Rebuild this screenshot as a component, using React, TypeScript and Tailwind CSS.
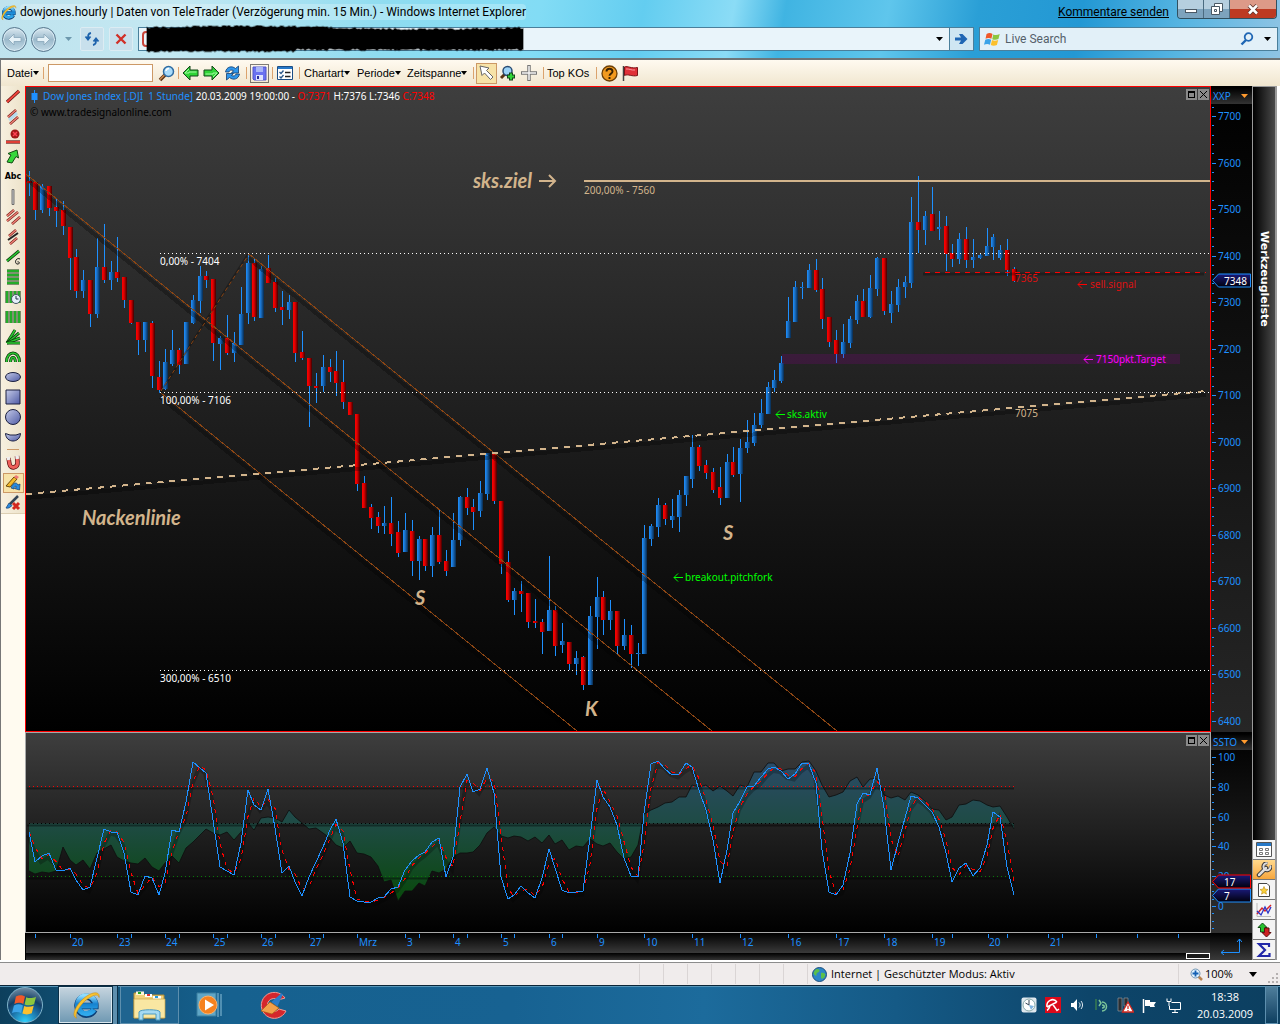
import React from 'react';

type Candle = [x: number, high: number, top: number, bottom: number, low: number, up: 0 | 1];

const CANDLES: Candle[] = [
  [29, 171, 181, 183, 196, 0], [35, 181, 182, 210, 220, 0], [42, 184, 186, 210, 213, 1], [49, 186, 186, 208, 216, 0],
  [56, 199, 207, 211, 227, 0], [63, 201, 210, 226, 235, 0], [70, 227, 227, 258, 290, 0], [76, 249, 257, 291, 298, 0],
  [83, 270, 280, 291, 298, 1], [90, 280, 280, 314, 327, 0], [97, 238, 267, 314, 318, 1], [104, 224, 267, 280, 283, 0],
  [111, 261, 272, 280, 290, 1], [117, 237, 272, 278, 282, 0], [124, 277, 277, 300, 308, 0], [131, 300, 300, 323, 324, 0],
  [138, 322, 322, 340, 355, 0], [145, 322, 322, 340, 352, 1], [152, 321, 323, 376, 388, 0], [159, 361, 377, 390, 393, 0],
  [165, 349, 362, 389, 390, 1], [172, 330, 350, 364, 366, 1], [179, 348, 350, 365, 374, 0], [186, 322, 322, 364, 364, 1],
  [193, 295, 300, 323, 324, 1], [200, 266, 276, 301, 313, 1], [206, 271, 276, 280, 288, 0], [213, 279, 279, 343, 361, 0],
  [220, 336, 338, 344, 370, 1], [227, 315, 338, 353, 355, 0], [234, 332, 343, 353, 362, 1], [241, 287, 314, 345, 345, 1],
  [248, 254, 263, 313, 324, 1], [254, 258, 263, 317, 321, 0], [261, 266, 269, 318, 318, 1], [268, 255, 268, 283, 283, 0],
  [275, 278, 282, 308, 312, 0], [282, 291, 307, 310, 325, 0], [289, 295, 302, 310, 319, 1], [295, 302, 302, 353, 362, 0],
  [302, 331, 352, 358, 360, 0], [309, 358, 358, 386, 427, 0], [316, 373, 386, 388, 403, 0], [323, 355, 367, 386, 392, 1],
  [330, 359, 367, 372, 382, 0], [336, 351, 371, 383, 396, 0], [343, 360, 382, 402, 409, 0], [350, 402, 402, 415, 415, 0],
  [357, 414, 414, 484, 491, 0], [364, 476, 483, 508, 508, 0], [371, 504, 507, 518, 529, 0], [378, 512, 517, 526, 533, 0],
  [384, 506, 523, 526, 534, 1], [391, 497, 523, 534, 546, 0], [398, 521, 532, 553, 557, 0], [405, 513, 530, 552, 552, 1],
  [412, 520, 531, 561, 576, 0], [419, 536, 539, 561, 580, 1], [425, 539, 539, 566, 571, 0], [432, 527, 535, 566, 577, 1],
  [439, 509, 535, 562, 564, 0], [446, 550, 561, 571, 576, 0], [453, 513, 540, 567, 567, 1], [460, 496, 497, 540, 546, 1],
  [467, 488, 497, 508, 515, 0], [473, 499, 507, 512, 530, 0], [480, 481, 493, 511, 517, 1], [487, 453, 453, 494, 500, 1],
  [494, 453, 453, 501, 504, 0], [501, 501, 501, 564, 574, 0], [508, 551, 562, 600, 602, 0], [514, 588, 591, 600, 615, 1],
  [521, 581, 591, 594, 612, 0], [528, 593, 593, 622, 628, 0], [535, 599, 621, 623, 628, 0], [542, 619, 622, 632, 654, 0],
  [549, 556, 610, 631, 631, 1], [555, 606, 610, 646, 656, 0], [562, 623, 641, 645, 653, 1], [569, 642, 642, 664, 670, 0],
  [576, 651, 658, 664, 675, 1], [583, 656, 657, 685, 690, 0], [590, 606, 616, 685, 685, 1], [597, 577, 597, 617, 649, 1],
  [603, 591, 597, 620, 635, 0], [610, 600, 611, 620, 630, 1], [617, 611, 611, 646, 654, 0], [624, 619, 635, 646, 650, 1],
  [631, 625, 635, 654, 668, 0], [638, 643, 653, 654, 666, 1], [644, 525, 538, 654, 654, 1], [651, 524, 526, 539, 546, 1],
  [658, 498, 505, 527, 537, 1], [665, 503, 505, 519, 525, 0], [672, 499, 516, 520, 528, 1], [679, 490, 495, 517, 532, 1],
  [686, 476, 476, 495, 506, 1], [692, 435, 447, 479, 488, 1], [699, 445, 447, 466, 471, 0], [706, 460, 465, 473, 479, 0],
  [713, 468, 472, 490, 493, 0], [720, 467, 487, 498, 505, 0], [727, 454, 462, 498, 498, 1], [733, 447, 462, 475, 477, 0],
  [740, 439, 448, 474, 502, 1], [747, 420, 442, 448, 453, 1], [754, 413, 425, 443, 446, 1], [761, 399, 413, 425, 428, 1],
  [768, 382, 387, 414, 414, 1], [774, 370, 380, 388, 392, 1], [781, 356, 363, 381, 383, 1], [788, 297, 321, 338, 338, 1],
  [795, 281, 287, 322, 322, 1], [802, 282, 287, 288, 299, 1], [809, 264, 270, 288, 288, 1], [816, 259, 270, 290, 292, 0],
  [822, 278, 289, 319, 329, 0], [829, 317, 317, 342, 347, 0], [836, 330, 340, 354, 363, 0], [843, 324, 342, 354, 358, 1],
  [850, 316, 319, 343, 348, 1], [857, 295, 301, 320, 324, 1], [863, 289, 301, 317, 317, 0], [870, 275, 288, 317, 318, 1],
  [877, 257, 258, 289, 296, 1], [884, 258, 258, 311, 315, 0], [891, 291, 304, 313, 323, 1], [898, 279, 287, 305, 312, 1],
  [905, 276, 282, 287, 298, 1], [911, 197, 222, 283, 288, 1], [918, 176, 222, 230, 253, 0], [925, 211, 216, 230, 245, 1],
  [932, 187, 214, 231, 231, 0], [939, 211, 227, 229, 240, 1], [946, 216, 226, 254, 271, 0], [952, 244, 253, 259, 267, 0],
  [959, 233, 239, 259, 264, 1], [966, 227, 239, 260, 268, 0], [973, 239, 257, 260, 268, 1], [980, 254, 255, 258, 259, 1],
  [987, 228, 246, 256, 256, 1], [993, 234, 237, 247, 260, 1], [1000, 245, 250, 258, 260, 1], [1007, 239, 250, 270, 276, 0],
  [1014, 267, 269, 281, 282, 0],
];

// one value per candle
const STOCH = [
  102, 132, 126, 123, 140, 141, 138, 150, 160, 157, 128, 99, 102, 102, 123, 162, 165, 146, 148, 165, 143, 100, 102, 72, 32,
  38, 43, 90, 137, 141, 145, 113, 60, 75, 80, 59, 98, 143, 136, 152, 166, 147, 132, 117, 100, 89, 113, 167, 171, 172,
  172, 168, 167, 159, 157, 140, 131, 125, 122, 112, 108, 147, 127, 57, 44, 62, 59, 38, 63, 147, 169, 165, 156, 163, 168,
  148, 119, 138, 160, 163, 162, 161, 107, 50, 67, 77, 95, 128, 146, 147, 83, 34, 31, 39, 45, 44, 33, 37, 60, 80,
  110, 153, 120, 83, 71, 57, 56, 47, 39, 37, 41, 49, 44, 33, 34, 53, 120, 162, 165, 155, 123, 74, 63, 65, 38,
  78, 140, 113, 88, 66, 68, 75, 82, 97, 123, 152, 138, 133, 146, 138, 115, 82, 87, 137, 165,
];

const AREA = [
  141, 144, 142, 143, 141, 117, 130, 135, 130, 139, 123, 119, 115, 127, 131, 133, 134, 128, 137, 141, 133, 126, 133, 118, 112,
  105, 99, 103, 105, 102, 110, 102, 93, 100, 88, 87, 88, 92, 80, 87, 93, 99, 98, 103, 108, 115, 118, 111, 123, 124,
  127, 136, 152, 150, 171, 161, 161, 153, 156, 141, 143, 139, 127, 123, 123, 122, 115, 103, 97, 106, 108, 106, 107, 111, 107,
  113, 105, 114, 110, 120, 116, 117, 109, 114, 116, 113, 122, 129, 127, 115, 84, 80, 77, 73, 72, 67, 67, 55, 57, 55,
  61, 56, 61, 66, 55, 57, 42, 42, 33, 33, 41, 39, 39, 32, 31, 41, 55, 67, 65, 62, 51, 47, 57, 49, 49,
  65, 68, 66, 70, 62, 65, 71, 79, 80, 90, 87, 75, 74, 70, 71, 75, 77, 76, 87, 99,
];

const TIME_TICKS = [
  35, 70, 117, 131, 165, 179, 213, 227, 261, 275, 309, 323, 357, 405, 419, 453, 467, 501, 514, 549, 562, 597, 644, 692,
  740, 788, 836, 884, 932, 952, 988, 1007, 1048, 1062, 1096, 1137, 1178,
];

const TIME_LABELS: [number, string][] = [
  [72, '20'], [119, '23'], [166, '24'], [214, '25'], [262, '26'], [310, '27'], [359, 'Mrz'], [407, '3'], [455, '4'],
  [503, '5'], [551, '6'], [599, '9'], [646, '10'], [694, '11'], [742, '12'], [790, '16'], [838, '17'], [886, '18'],
  [934, '19'], [989, '20'], [1050, '21'],
];

const toPath = (values: number[]) =>
  values.map((v, i) => `${i ? 'L' : 'M'}${CANDLES[i][0]} ${v}`).join('');

const signal = STOCH.map((v, i) => (i ? (v + STOCH[i - 1]) / 2 : v));
const stochPath = toPath(STOCH);
const signalPath = toPath(signal);
const areaLine = toPath(AREA);

const chartFont = "font-['Noto_Sans','Open_Sans',sans-serif]";
const noteFont = "font-['Lato',sans-serif] font-bold italic text-[20px]";

/* ---------- browser chrome ---------- */

function IeLogo({ size }: { size: number }) {
  return (
    <svg width={size} height={size} viewBox="0 0 32 32" fill="none">
      <defs>
        <linearGradient id="ieBlue" x1="0" y1="0" x2="0" y2="1">
          <stop offset="0" stopColor="#8fdcff" />
          <stop offset=".45" stopColor="#1682d0" />
          <stop offset="1" stopColor="#2fa9ec" />
        </linearGradient>
      </defs>
      <path d="M25 21A9.5 9.5 0 1 1 26 17H10" stroke="#0b3f77" strokeWidth="7" />
      <path d="M24.500 21A9.500 9.500 0 1 1 26 17H10" stroke="url(#ieBlue)" strokeWidth="5.500" />
      <path d="M6 30C-1 28 6 14 16 7C23 2 31 1 30 8C29 3 23 6 17 10C9 16 3 27 6 30Z" fill="#f7c331" stroke="#c98a10" strokeWidth=".6" />
    </svg>
  );
}

function WinFlag({ size }: { size: number }) {
  return (
    <svg width={size} height={size} viewBox="0 0 20 20">
      <path d="M3 3.500C5.500 2 8 2.300 10 3.500L8.700 9.200C6.700 8 4.300 8 1.800 9.200Z" fill="#f0592a" />
      <path d="M10.900 4C13 5 15.500 5 18.500 3.600L17 9.400C14.500 10.500 12 10.500 9.700 9.600Z" fill="#8cc63e" />
      <path d="M1.500 10.300C4 9.200 6.300 9.200 8.400 10.300L7 16.200C5 15 2.500 15 0 16.200Z" fill="#3ba3e8" />
      <path d="M9.400 10.700C11.500 11.700 14 11.700 16.700 10.600L15.200 16.400C12.500 17.600 10 17.400 8 16.600Z" fill="#fbc02e" />
    </svg>
  );
}

function Scribble() {
  const top: string[] = [];
  const bottom: string[] = [];
  for (let x = 1; x <= 378; x += 2) {
    const n = Math.abs(Math.sin(x * 12.9) * 43.7) % 1;
    const m = Math.abs(Math.sin(x * 7.3 + 2) * 91.1) % 1;
    top.push(`${x},${(2 + n * 2 - Math.sin(x / 60) * 1.5).toFixed(1)}`);
    bottom.unshift(`${x},${(25 + m * 2 - (x > 150 ? 1.5 : 0)).toFixed(1)}`);
  }
  const points = [...top, ...bottom].join(' ');
  return (
    <svg width="379" height="30" className="absolute -top-[3px] left-[7px]">
      <polygon points={points} fill="#000" stroke="#000" strokeOpacity=".35" strokeWidth="2" strokeLinejoin="round" />
    </svg>
  );
}

function NavCircle({ label, flip }: { label: string; flip?: boolean }) {
  return (
    <button aria-label={label} className="flex size-[25px] items-center justify-center rounded-full border border-[#56758c] bg-linear-to-b from-[#dbe9f1] via-[#9bb9cb] to-[#c3dbe7] shadow-[inset_0_0_0_1px_#d8eaf3]">
      <svg width="15" height="13" viewBox="0 0 15 13" className={flip ? 'rotate-180' : ''}>
        <path d="M7 1L1.500 6.500L7 12V8.500H14V4.500H7Z" fill="#e6f2f8" stroke="#88a6b9" strokeWidth=".8" />
      </svg>
    </button>
  );
}

function BrowserHeader() {
  return (
    <header className="h-[60px] shrink-0 border-b-2 border-[#6d7477] bg-[linear-gradient(100deg,#bfe3ee_0%,#c3e8f2_14%,#8fdcf0_30%,#82dcf5_42%,#63cdf0_50%,#8bdcf6_57%,#40b4e2_61%,#5fc6ec_69%,#2a9fd6_76%,#2398d4_84%,#57b5e2_92%,#8fc4e4_100%)] font-['Roboto','Noto_Sans',sans-serif] text-[12px]">
      <div className="flex h-[25px] items-start">
        <div className="flex h-6 flex-1 items-center gap-[3px]">
          <IeLogo size={17} />
          <h1 className="whitespace-nowrap rounded bg-white/25 leading-4 text-black">
            dowjones.hourly | Daten von TeleTrader (Verzögerung min. 15 Min.) - Windows Internet Explorer
          </h1>
        </div>
        <a href="#feedback" className="mr-2 leading-6 text-black underline">Kommentare senden</a>
        <div className="mr-[3px] flex h-[19px] overflow-hidden rounded-b border border-t-0 border-[#31505f]">
          <button aria-label="Minimieren" className="flex w-[26px] items-center justify-center border-r border-[#4b6b80] bg-linear-to-b from-[#b6cfdf] from-50% to-[#7da3bd] to-50%">
            <span className="mt-1 h-1 w-3 border border-[#4a5864] bg-white" />
          </button>
          <button aria-label="Wiederherstellen" className="flex w-[26px] items-center justify-center border-r border-[#4b6b80] bg-linear-to-b from-[#b6cfdf] from-50% to-[#7da3bd] to-50%">
            <svg width="12" height="12" viewBox="0 0 12 12" fill="#fff" stroke="#4a5864"><path d="M3.500 .5H11.500V8.500H3.500Z" /><path d="M.5 3.500H8.500V11.500H.5Z" /><path d="M3.500 6.500H5.500V8.500H3.500Z" /></svg>
          </button>
          <button aria-label="Schließen" className="flex w-[46px] items-center justify-center bg-linear-to-b from-[#dd9a88] from-50% to-[#bd3a22] to-50%">
            <svg width="12" height="11" viewBox="0 0 12 11"><path d="M2 1.500L10 9.500M10 1.500L2 9.500" stroke="#59332d" strokeWidth="4" /><path d="M2 1.500L10 9.500M10 1.500L2 9.500" stroke="#fff" strokeWidth="2.500" /></svg>
          </button>
        </div>
      </div>
      <div className="flex h-7 items-center gap-[5px] pl-0.5 pr-0.5">
        <div className="flex items-center gap-1">
          <NavCircle label="Zurück" />
          <NavCircle label="Vorwärts" flip />
        </div>
        <button aria-label="Verlauf" className="flex w-[14px] justify-center">
          <svg width="7" height="4"><path d="M0 0H7L3.500 4Z" fill="#6d98ad" /></svg>
        </button>
        <button aria-label="Aktualisieren" className="flex size-6 items-center justify-center rounded-xs border border-[#dcecf3] bg-[#c8e0ec]">
          <svg width="16" height="16" viewBox="0 0 16 16" fill="none" stroke="#1d62ac" strokeWidth="1.800"><path d="M7 2C4 2.500 4 4.500 4 8M1.500 5.500L4 8.500L6.500 5.500" /><path d="M9 14C12 13.500 12 11.500 12 8M9.500 10.500L12 7.500L14.500 10.500" /></svg>
        </button>
        <button aria-label="Abbrechen" className="flex size-6 items-center justify-center rounded-xs border border-[#dcecf3] bg-[#c8e0ec]">
          <svg width="12" height="12" viewBox="0 0 12 12"><path d="M1.500 1.500L10.500 10.500M10.500 1.500L1.500 10.500" stroke="#d03028" strokeWidth="2.400" /></svg>
        </button>
        <div className="relative flex h-6 min-w-0 flex-1 items-center border border-[#4a7f9b] bg-[#e9f4fa]">
          <span className="ml-[3px] h-4 w-3 rounded border-2 border-[#c8453b]" />
          <input aria-label="Adresse" className="min-w-0 flex-1 bg-transparent outline-none" />
          <Scribble />
          <button aria-label="Adressliste" className="flex w-5 justify-center"><svg width="7" height="4"><path d="M0 0H7L3.500 4Z" fill="#000" /></svg></button>
          <button aria-label="Wechseln zu" className="flex h-full w-6 items-center justify-center border-l border-[#4a7f9b] bg-[#cfe6f2]">
            <svg width="13" height="12" viewBox="0 0 13 12"><path d="M0 4.500H6L4 1H7.500L12.500 6L7.500 11H4L6 7.500H0Z" fill="#1f66b4" /></svg>
          </button>
        </div>
        <div className="flex h-6 w-[299px] items-center border border-[#4a7f9b] bg-[#e2f0f8] pl-1">
          <WinFlag size={17} />
          <input aria-label="Live Search" placeholder="Live Search" className="min-w-0 flex-1 bg-transparent pl-1 outline-none placeholder:text-[#55606a]" />
          <button aria-label="Suchen" className="flex w-5 justify-center">
            <svg width="14" height="14" viewBox="0 0 14 14" fill="none"><circle cx="8.500" cy="5" r="3.800" stroke="#1f66b4" strokeWidth="1.800" /><path d="M6 8L1.500 12.500" stroke="#1f66b4" strokeWidth="2.400" /></svg>
          </button>
          <button aria-label="Suchoptionen" className="flex w-5 justify-center"><svg width="7" height="4"><path d="M0 0H7L3.500 4Z" fill="#000" /></svg></button>
        </div>
      </div>
    </header>
  );
}

/* ---------- chart toolbar ---------- */

function Sep({ className }: { className: string }) {
  return <span className={`flex justify-center ${className}`}><span className="h-3 w-px bg-[#dba36e]" /></span>;
}

function ToolButton({ label, active, children }: { label: string; active?: boolean; children: React.ReactNode }) {
  return (
    <button aria-label={label} className={`flex size-[21px] shrink-0 items-center justify-center ${active ? 'border border-[#cc9966] bg-[#f7e3a8]' : ''}`}>
      {children}
    </button>
  );
}

function MenuButton({ className, children }: { className: string; children: string }) {
  return (
    <button className={`flex shrink-0 items-center text-left ${className}`}>
      {children}
      <svg width="6" height="4"><path d="M0 0H6L3 4Z" fill="#000" /></svg>
    </button>
  );
}

function GreenArrow({ flip }: { flip?: boolean }) {
  return (
    <svg width="17" height="16" viewBox="0 0 17 16" className={flip ? 'rotate-180' : ''}>
      <path d="M8 1L1 8L8 15V11H16V5H8Z" fill="#2fd436" stroke="#14461a" />
      <path d="M7 4L3 8H7V7H14.500" fill="none" stroke="#a4f7a0" />
    </svg>
  );
}

function ChartToolbar() {
  return (
    <div role="toolbar" aria-label="Chart" className="flex h-[26px] shrink-0 items-center border-l border-[#777] bg-linear-to-b from-[#fffaf0] to-[#f0e6cf] pl-1.5 font-['Liberation_Sans',Arial,sans-serif] text-[11px] text-black">
      <MenuButton className="w-8">Datei</MenuButton>
      <Sep className="w-[9px]" />
      <input aria-label="Symbol" className="h-[18px] w-[105px] border border-[#cc9966] bg-white outline-none" />
      <span className="w-[3px]" />
      <ToolButton label="Suchen">
        <svg width="17" height="17" viewBox="0 0 17 17"><path d="M7 10L2 15" stroke="#5b3414" strokeWidth="3.500" /><path d="M6.500 10L2 14.500" stroke="#d08a4e" strokeWidth="1.500" /><circle cx="10.500" cy="6.500" r="5" fill="#a9dcfb" stroke="#2f6ca2" strokeWidth="1.500" /><path d="M8 6A3 3 0 0 1 11 3.500" stroke="#fff" strokeWidth="1.500" fill="none" /></svg>
      </ToolButton>
      <Sep className="w-[3px]" />
      <ToolButton label="Zurück"><GreenArrow /></ToolButton>
      <ToolButton label="Vor"><GreenArrow flip /></ToolButton>
      <ToolButton label="Aktualisieren">
        <svg width="17" height="16" viewBox="0 0 17 16" fill="#2f96ea" stroke="#123e70" strokeWidth=".8"><path d="M1.500 7C2.500 1.500 8 .5 11.500 3.500L14.500 1V8H7.500L9.500 5.700C7.500 4.500 5.500 5 5 7Z" /><path d="M15.500 9C14.500 14.500 9 15.500 5.500 12.500L2.500 15V8.500H9.500L7.500 10.500C9.500 11.500 11.500 11 12 9Z" /></svg>
      </ToolButton>
      <Sep className="w-[6px]" />
      <ToolButton label="Speichern">
        <svg width="19" height="19" viewBox="0 0 19 19"><path d="M.5 .5H18.500V18.500H.5Z" fill="none" stroke="#000" strokeDasharray="1 1" /><path d="M3 3H16V16H4L3 15Z" fill="#6a72f0" stroke="#5057c9" /><path d="M6 3H13V8H6Z" fill="#a9b6f7" /><path d="M6 11H13V16H6Z" fill="#dfe4fd" /><path d="M7 12H9V15H7Z" fill="#2a2f9c" /></svg>
      </ToolButton>
      <Sep className="w-1" />
      <ToolButton label="Liste">
        <svg width="16" height="14" viewBox="0 0 16 14"><path d="M.5 .5H15.500V13.500H.5Z" fill="#fff" stroke="#1b4e86" /><path d="M1 1H15V3H1Z" fill="#2779c8" /><path d="M2.500 6L4 7.500L6.500 4.500M2.500 10.500L4 12L6.500 9" fill="none" stroke="#2d5a8c" strokeWidth="1.400" /><path d="M8 6.500H13.500M8 10.500H13.500" stroke="#222" strokeWidth="1.400" /></svg>
      </ToolButton>
      <Sep className="w-[9px]" />
      <MenuButton className="w-[53px]">Chartart</MenuButton>
      <MenuButton className="w-[50px]">Periode</MenuButton>
      <MenuButton className="w-[63px]">Zeitspanne</MenuButton>
      <Sep className="w-[6px]" />
      <ToolButton label="Zeiger" active>
        <svg width="15" height="16" viewBox="0 0 15 16"><path d="M1 1L10 3L7.500 5.500L14 12L11.500 14.500L5.500 8L3 10.500Z" fill="#fff" stroke="#666" /></svg>
      </ToolButton>
      <ToolButton label="Vergrößern">
        <svg width="17" height="17" viewBox="0 0 17 17"><path d="M6 9L2 13" stroke="#5b3414" strokeWidth="3" /><circle cx="8.500" cy="6" r="4.500" fill="#9cd3f7" stroke="#2a4d74" strokeWidth="1.500" /><path d="M12 7.500V15.500M8 11.500H16" stroke="#14461a" strokeWidth="4" /><path d="M12 8.500V14.500M9 11.500H15" stroke="#2fd436" strokeWidth="2" /></svg>
      </ToolButton>
      <ToolButton label="Fadenkreuz">
        <svg width="16" height="16" viewBox="0 0 16 16"><path d="M8 0V16M0 8H16" stroke="#777" strokeWidth="3.500" /><path d="M8 1V15M1 8H15" stroke="#f4f4f4" strokeWidth="1.500" /></svg>
      </ToolButton>
      <Sep className="w-2" />
      <button className="w-[46px] shrink-0 text-left">Top KOs</button>
      <Sep className="w-[6px]" />
      <ToolButton label="Hilfe">
        <svg width="17" height="17" viewBox="0 0 17 17"><circle cx="8.500" cy="8.500" r="7.500" fill="#f29a1f" stroke="#6d3f06" strokeWidth="1.300" /><path d="M5.500 6.500C5.500 2.800 11.500 2.800 11.500 6.500C11.500 8.800 8.500 8.500 8.500 10.800M8.500 12V14" fill="none" stroke="#3a2203" strokeWidth="1.900" /></svg>
      </ToolButton>
      <ToolButton label="Melden">
        <svg width="17" height="17" viewBox="0 0 17 17"><path d="M1.500 1V16" stroke="#444" strokeWidth="1.500" /><path d="M2.500 2C6 .5 9 4 15.500 2.500V10.500C10 12 6 8.500 2.500 10.500Z" fill="#e03038" stroke="#7a1216" /><path d="M4 4C7 3.500 9 5.500 13 5" stroke="#f8999c" fill="none" /></svg>
      </ToolButton>
    </div>
  );
}

/* ---------- drawing tools on the left ---------- */

const redBar = (d: string) => (
  <g>
    <path d={d} stroke="#5d1010" strokeWidth="3.200" />
    <path d={d} stroke="#f0463c" strokeWidth="1.800" />
  </g>
);

const thinBar = (d: string) => (
  <g>
    <path d={d} stroke="#7a2018" strokeWidth="2.600" />
    <path d={d} stroke="#f4867c" strokeWidth="1.200" />
  </g>
);

const greenBar = (d: string, key?: number) => (
  <g key={key}>
    <path d={d} stroke="#0b3b0d" strokeWidth="3" fill="none" />
    <path d={d} stroke="#2bc832" strokeWidth="1.600" fill="none" />
  </g>
);

const DRAW_TOOLS: [string, React.ReactNode][] = [
  ['Trendlinie', redBar('M2 13L14 2')],
  ['Parallele', <g key="p"><path d="M4 11L12 4" stroke="#b5dcf0" strokeWidth="3" />{thinBar('M3 8L11 1')}{thinBar('M5 15L13 8')}</g>],
  ['Horizontale', <g key="h"><circle cx="10" cy="5" r="4.500" fill="#a01818" /><path d="M8 3L12 7M12 3L8 7" stroke="#f45" strokeWidth="1.500" />{redBar('M1 13H15')}</g>],
  ['Pfeil', <path key="a" d="M12 1L13.500 9L11 7.500L7 14L2 13L6 6L3 4.500Z" fill="#35d83b" stroke="#124a14" />],
  ['Text', null],
  ['Vertikale', <path key="v" d="M7 .5H9V15.500H7Z" fill="#ccc" stroke="#555" strokeWidth=".8" />],
  ['Regression', <g key="r">{thinBar('M2 7L9 1')}{thinBar('M2 12L13 3')}{thinBar('M7 15L15 8')}</g>],
  ['Kanal', <g key="k">{thinBar('M4 7L11 1')}<path d="M3 11L13 4" stroke="#222" strokeWidth="2" />{thinBar('M5 15L12 9')}</g>],
  ['Gann', <g key="g">{greenBar('M2 12L14 2')}<path d="M15 10C11 8 9 14 12 15C15 15.500 15 12.500 12.500 12.800" fill="none" stroke="#111" /></g>],
  ['Retracement', <g key="f">{[2, 6, 10, 14].map((y) => greenBar(`M2 ${y}H14`, y))}</g>],
  ['Zeitzonen', <g key="z">{[2, 6, 10, 14].map((x) => greenBar(`M${x} 2V14`, x))}<circle cx="11" cy="10" r="4.500" fill="#e5f0fa" stroke="#456" /><path d="M11 7V10H13.500" stroke="#234" fill="none" /></g>],
  ['Zeitlinien', <g key="l">{[2, 6, 10, 14].map((x) => greenBar(`M${x} 2V14`, x))}</g>],
  ['Fächer', <g key="fa">{greenBar('M2 14L10 1')}{greenBar('M2 14L14 4')}{greenBar('M2 14L15 9')}{greenBar('M2 14H15')}</g>],
  ['Bögen', <g key="b">{greenBar('M1.500 13C1.500 1 14.500 1 14.500 13')}{greenBar('M5.500 13C6 7 10 7 10.500 13')}</g>],
  ['Ellipse', <ellipse key="e" cx="8" cy="8" rx="7.500" ry="4.500" fill="url(#shape)" stroke="#1c2140" />],
  ['Rechteck', <path key="q" d="M1 1H15V15H1Z" fill="url(#shape)" stroke="#1c2140" />],
  ['Kreis', <circle key="c" cx="8" cy="8" r="7.500" fill="url(#shape)" stroke="#1c2140" />],
  ['Halbkreis', <path key="hk" d="M.5 4.500L5 6H11L15.500 4.500C15 14.500 1 14.500 .5 4.500Z" fill="url(#shape)" stroke="#1c2140" />],
];

const magnet = (
  <g fill="none">
    <path d="M3.500 3L4.500 9C5.500 14.500 13 13 12.500 7L12 1" stroke="#5d1010" strokeWidth="4.500" />
    <path d="M3.500 3L4.500 9C5.500 14.500 13 13 12.500 7L12 1" stroke="#ee5f5a" strokeWidth="3" />
    <path d="M3.300 2L3.700 5M12 .5L12.300 4" stroke="#eee" strokeWidth="3.500" />
  </g>
);

function DrawTool({ label, active, children }: { label: string; active?: boolean; children: React.ReactNode }) {
  return (
    <button aria-label={label} className={`flex h-5 w-[21px] items-center justify-center ${active ? 'border border-[#cc9966] bg-[#f7e3a8]' : ''}`}>
      {label === 'Text'
        ? <span className="font-['DejaVu_Sans',Verdana,sans-serif] text-[8px] font-bold text-black">Abc</span>
        : <svg width="16" height="16" viewBox="0 0 16 16">{children}</svg>}
    </button>
  );
}

function DrawingTools() {
  return (
    <div className="w-[25px] shrink-0 border-l border-[#777] bg-[#fffbf0]">
      <svg width="0" height="0" className="absolute">
        <linearGradient id="shape" x1="0" y1="0" x2="1" y2="1"><stop offset="0" stopColor="#c5cbe8" /><stop offset="1" stopColor="#4f5ba5" /></linearGradient>
      </svg>
      <div className="flex flex-col items-center border-b border-[#ddd0b4] bg-linear-to-r from-[#f7f0df] to-[#ece2c9] pt-px">
        {DRAW_TOOLS.map(([label, icon]) => <DrawTool key={label} label={label}>{icon}</DrawTool>)}
        <span className="mb-[3px] mt-[2px] h-px w-3 bg-[#cc9966]" />
        <DrawTool label="Magnet">{magnet}</DrawTool>
        <DrawTool label="Zeichnen" active>
          <g><path d="M1 11L9 2L12 4L5 12Z" fill="#f4b92a" stroke="#6d4a08" /><path d="M9 2L11 0L14 2L12 4Z" fill="#e77" /><path d="M6 13C8 7 12 7 13 10L15 9L14.500 15L9.500 13.500L11.500 12C10 10.500 9 12 9 14Z" fill="#2a8be0" stroke="#123e70" strokeWidth=".7" /></g>
        </DrawTool>
        <DrawTool label="Löschen">
          <g><path d="M1 13L4 8L7 10.500C5 13 3 13.500 1 13Z" fill="#2a8be0" stroke="#123e70" strokeWidth=".7" /><path d="M5 9L13 1" stroke="#345" strokeWidth="2.500" /><path d="M8 8L14 14M14 8L8 14" stroke="#d3281e" strokeWidth="3" /></g>
        </DrawTool>
      </div>
    </div>
  );
}

/* ---------- chart ---------- */

function PaneButtons() {
  return (
    <div className="absolute right-px top-0.5 flex gap-px">
      <button aria-label="Maximieren" className="flex size-[11px] items-center justify-center bg-[#8a8a8a]"><span className="size-[7px] border border-t-2 border-black" /></button>
      <button aria-label="Schließen" className="flex size-[11px] items-center justify-center bg-[#8a8a8a]">
        <svg width="9" height="9" viewBox="0 0 9 9"><path d="M1 1L8 8M8 1L1 8" stroke="#000" /></svg>
      </button>
    </div>
  );
}

function ShadowLine({ x1, y1, x2, y2, stroke, width = 1, dash }: { x1: number; y1: number; x2: number; y2: number; stroke: string; width?: number; dash?: string }) {
  return (
    <g shapeRendering="crispEdges">
      <line x1={x1 - 1} y1={y1 + 4} x2={x2 - 1} y2={y2 + 4} stroke="#000" strokeOpacity=".28" strokeWidth="4" />
      <line x1={x1} y1={y1} x2={x2} y2={y2} stroke={stroke} strokeWidth={width} strokeDasharray={dash} />
    </g>
  );
}

function Arrow({ x, y, color }: { x: number; y: number; color: string }) {
  return <path d={`M${x + 9} ${y}H${x}M${x + 4} ${y - 4}L${x} ${y}L${x + 4} ${y + 4}`} stroke={color} fill="none" />;
}

function PricePlot() {
  return (
    <svg className={`absolute inset-0 size-full text-[10px] ${chartFont}`}>
      <defs>
        <linearGradient id="up"><stop offset="0" stopColor="#1e90ff" /><stop offset=".4" stopColor="#1a6fc4" /><stop offset="1" stopColor="#082a4d" /></linearGradient>
        <linearGradient id="down"><stop offset="0" stopColor="#ff0000" /><stop offset=".4" stopColor="#e00000" /><stop offset="1" stopColor="#3d0000" /></linearGradient>
      </defs>
      <g transform="translate(-26 -87)">
        {CANDLES.map(([x, high, top, bottom, low, up]) => (
          <g key={x}>
            <path d={`M${x + 0.5} ${high}V${low}`} stroke="#1e90ff" />
            <rect x={x - 2} y={top} width="5" height={Math.max(bottom - top, 1)} fill={up ? 'url(#up)' : 'url(#down)'} />
          </g>
        ))}
        <rect x="782" y="354" width="398" height="10" fill="#800080" fillOpacity=".24" />

        <ShadowLine x1={26} y1={174} x2={712} y2={731} stroke="#8b4513" />
        <ShadowLine x1={249} y1={254} x2={837} y2={731} stroke="#8b4513" />
        <ShadowLine x1={161} y1={393} x2={577} y2={731} stroke="#8b4513" />
        <path d="M160 393L248 254" stroke="#000" strokeOpacity=".3" strokeWidth="2" />
        <path d="M161 391L249 254" stroke="#8b4513" strokeDasharray="4 3" />
        <ShadowLine x1={26} y1={494} x2={1207} y2={391} stroke="#d2b48c" width={2} dash="6 6" />

        <path d="M160 253.500H1210M160 392.500H1210M160 670.500H1210" stroke="#fff" strokeDasharray="1 3" />
        <path d="M584 181H1210" stroke="#d2b48c" strokeWidth="2" />
        <path d="M923 274H1204" stroke="#000" strokeOpacity=".3" strokeWidth="3" />
        <path d="M925 272.500H1206" stroke="#f00" strokeDasharray="5 5" />

        <g fill="#fff">
          <text x="160" y="265">0,00% - 7404</text>
          <text x="160" y="404">100,00% - 7106</text>
          <text x="160" y="682">300,00% - 6510</text>
        </g>
        <text x="584" y="194" fill="#d2b48c">200,00% - 7560</text>
        <text x="1015" y="417" fill="#d2b48c">7075</text>
        <text x="1015" y="282" fill="#dd1111">7365</text>

        <Arrow x={1078} y={284.5} color="#f00" />
        <text x="1090" y="288" fill="#dd1111">sell.signal</text>
        <Arrow x={1084} y={359.5} color="#f0f" />
        <text x="1096" y="363" fill="#f0f">7150pkt.Target</text>
        <Arrow x={776} y={414.5} color="#0f0" />
        <text x="787" y="418" fill="#0f0">sks.aktiv</text>
        <Arrow x={674} y={577.5} color="#0f0" />
        <text x="685" y="581" fill="#0f0">breakout.pitchfork</text>

        <g fill="#d2b48c" className={noteFont}>
          <text x="473" y="188">sks.ziel</text>
          <text x="82" y="525">Nackenlinie</text>
          <text x="415" y="605">S</text>
          <text x="585" y="716">K</text>
          <text x="723" y="540">S</text>
        </g>
        <path d="M539 181H555M549 175L555 181L549 187" stroke="#d2b48c" strokeWidth="2" fill="none" />
      </g>
    </svg>
  );
}

function Tag({ y, text, stroke }: { y: number; text: string; stroke: string }) {
  return (
    <g>
      <path d={`M1.500 ${y}L7.500 ${y - 6.5}H39.500V${y + 6.5}H7.500Z`} fill="url(#tag)" stroke={stroke} />
      <text x="13" y={y + 4} fill="#fff">{text}</text>
    </g>
  );
}

function AxisHead({ children }: { children: string }) {
  return (
    <button className="absolute inset-x-0 top-0.5 flex h-4 items-center justify-between bg-[linear-gradient(#000,#333)] pl-0.5 pr-1 text-[10px] text-[#1e90ff]">
      <span>{children}</span>
      <svg width="7" height="4"><path d="M0 0H7L3.500 4Z" fill="#ff9a2e" /></svg>
    </button>
  );
}

function PriceAxis() {
  const ticks = Array.from({ length: 67 }, (_, i) => Math.round(30 + (i - 1) * 9.3));
  return (
    <div className={`relative w-[41px] shrink-0 bg-[linear-gradient(#000,#262626)] ${chartFont}`}>
      <svg className="absolute inset-0 size-full text-[10px]">
        <defs><linearGradient id="tag" x1="0" y1="0" x2="0" y2="1"><stop offset="0" stopColor="#1a1a78" /><stop offset="1" stopColor="#00000c" /></linearGradient></defs>
        {ticks.map((y) => <path key={y} d={`M1 ${y + 0.5}H3`} stroke="#1e90ff" />)}
        {Array.from({ length: 14 }, (_, i) => {
          const y = Math.round(30 + i * 46.5);
          return (
            <g key={i}>
              <path d={`M1 ${y + 0.5}H5`} stroke="#1e90ff" />
              <text x="7" y={y + 4} fill="#1e90ff">{7700 - i * 100}</text>
            </g>
          );
        })}
        <Tag y={194.5} text="7348" stroke="#1e90ff" />
      </svg>
      <AxisHead>XXP</AxisHead>
    </div>
  );
}

function StochPlot() {
  const start = CANDLES[0][0];
  const end = CANDLES[CANDLES.length - 1][0];
  return (
    <svg className="absolute inset-0 size-full" fill="none">
      <defs>
        <linearGradient id="area" gradientUnits="userSpaceOnUse" x1="0" y1="32" x2="0" y2="170">
          <stop offset="0" stopColor="#2b4b68" />
          <stop offset=".45" stopColor="#1e4b44" />
          <stop offset=".75" stopColor="#134925" />
          <stop offset="1" stopColor="#084a0c" />
        </linearGradient>
      </defs>
      <g transform="translate(-26 -3)">
        <path d={`${areaLine}L${end} 93.500H${start}Z`} fill="url(#area)" />
        <path d={areaLine} stroke="#0c0c0c" strokeOpacity=".8" />
        <path d={`M${start - 2} 58.500H${end}M${start - 2} 95.500H${end}M${start - 2} 148.500H${end}`} stroke="#000" strokeOpacity=".4" strokeWidth="2" />
        <path d={`M${start} 56.500H${end}`} stroke="#f00" strokeDasharray="1 3" />
        <path d={`M${start} 93.500H${end}`} stroke="#000" strokeDasharray="1 3" />
        <path d={`M${start} 146.500H${end}`} stroke="#0a7a0a" strokeDasharray="1 3" />
        <path d={signalPath} transform="translate(-1 3)" stroke="#000" strokeOpacity=".25" strokeWidth="4" />
        <g shapeRendering="crispEdges">
          <path d={signalPath} stroke="#f00" strokeDasharray="4 5" />
          <path d={stochPath} stroke="#1e90ff" />
        </g>
      </g>
    </svg>
  );
}

function StochAxis() {
  return (
    <div className={`relative w-[41px] shrink-0 bg-[linear-gradient(#000,#303030)] ${chartFont}`}>
      <svg className="absolute inset-0 size-full text-[10px]">
        {Array.from({ length: 24 }, (_, i) => <path key={i} d={`M1 ${Math.round(25 + i * 7.45) + 0.5}H3`} stroke="#1e90ff" />)}
        {Array.from({ length: 6 }, (_, i) => {
          const y = Math.round(25 + i * 29.8);
          return (
            <g key={i}>
              <path d={`M1 ${y + 0.5}H5`} stroke="#1e90ff" />
              <text x="7" y={y + 4} fill="#1e90ff">{100 - i * 20}</text>
            </g>
          );
        })}
        <Tag y={163.5} text="7" stroke="#1e90ff" />
        <Tag y={149.5} text="17" stroke="#f00" />
      </svg>
      <AxisHead>SSTO</AxisHead>
    </div>
  );
}

function TimeAxis() {
  return (
    <div className="flex h-[27px] shrink-0 border-l border-black bg-black">
      <div className="flex min-w-0 flex-1 flex-col">
        <svg className={`h-5 w-full bg-[linear-gradient(#000,#3a3a3a)] text-[10px] ${chartFont}`}>
          <g transform="translate(-26 0)">
            {TIME_TICKS.map((x) => <path key={x} d={`M${x + 0.5} 1V5`} stroke="#1e90ff" />)}
            {TIME_LABELS.map(([x, label]) => <text key={x} x={x} y="13" fill="#1e90ff">{label}</text>)}
          </g>
        </svg>
        <div className="flex h-[7px] justify-end bg-[linear-gradient(#000,#333)]">
          <span className="h-[6px] w-6 border border-white bg-[#1a1a1a]" />
        </div>
      </div>
      <div className="flex w-[42px] items-center justify-center bg-[linear-gradient(#000,#3a3a3a)]">
        <svg width="22" height="17" viewBox="0 0 22 17" fill="none" stroke="#1e90ff"><path d="M1 14.500H19.500V1M4 12L1 14.500L4 17M17 4L19.500 1L22 4" /></svg>
      </div>
    </div>
  );
}

function ChartArea() {
  return (
    <main className="flex min-w-0 flex-1 flex-col">
      <div className="flex min-h-0 flex-1">
        <section className="relative min-w-0 flex-1 overflow-hidden border border-[#f00] bg-[linear-gradient(#3e3e3e,#000)]">
          <PricePlot />
          <div className={`absolute left-1 top-0.5 text-[10px] ${chartFont}`}>
            <p className="flex h-[14px] items-center whitespace-pre leading-[14px] text-white">
              <svg width="9" height="13" viewBox="0 0 9 13" className="mr-1"><path d="M4.500 0V13" stroke="#1e90ff" /><path d="M1.500 3H7.500V10H1.500Z" fill="#1e90ff" /></svg>
              <span className="text-[#1e90ff]">Dow Jones Index [.DJI  1 Stunde]</span> 20.03.2009 19:00:00 - <span className="text-[#f00]">O:7371</span> H:7376 L:7346 <span className="text-[#f00]">C:7348</span>
            </p>
            <p className="leading-[18px] text-black">© www.tradesignalonline.com</p>
          </div>
          <PaneButtons />
        </section>
        <PriceAxis />
      </div>
      <div className="flex h-[201px] shrink-0">
        <section className="relative min-w-0 flex-1 overflow-hidden border border-[#a9a9a9] bg-[linear-gradient(#3e3e3e,#000)]">
          <StochPlot />
          <PaneButtons />
        </section>
        <StochAxis />
      </div>
      <TimeAxis />
    </main>
  );
}

/* ---------- right strip ---------- */

const SIDE_ICONS: [string, React.ReactNode][] = [
  ['Übersicht', <g key="1"><path d="M.5 .5H15.500V14.500H.5Z" fill="#fff" stroke="#555" /><path d="M1 1H15V4H1Z" fill="#2779c8" /><path d="M3.500 6.500H6.500V8.500H3.500ZM9.500 6.500H12.500V8.500H9.500ZM3.500 10.500H6.500V12.500H3.500ZM9.500 10.500H12.500V12.500H9.500Z" fill="none" stroke="#777" /></g>],
  ['Werkzeuge', <g key="2"><path d="M3 13L10 6" stroke="#333" strokeWidth="4.500" strokeLinecap="round" /><path d="M14.500 3.500A3.800 3.800 0 1 1 11.500 1" fill="none" stroke="#333" strokeWidth="3.500" /><path d="M3 13L10 6" stroke="#ddd" strokeWidth="2.500" strokeLinecap="round" /><path d="M14.200 3.500A3.500 3.500 0 1 1 11.500 1.300" fill="none" stroke="#ddd" strokeWidth="2" /></g>],
  ['Favoriten', <g key="3"><path d="M2.500 1.500H11L13.500 4V14.500H2.500Z" fill="#fff" stroke="#444" /><path d="M8 4.500L9.200 7.200L12 7.500L9.800 9.400L10.500 12.200L8 10.700L5.500 12.200L6.200 9.400L4 7.500L6.800 7.200Z" fill="#f9cf3a" stroke="#b98a12" strokeWidth=".6" /></g>],
  ['Indikatoren', <g key="4" fill="none"><path d="M1 1V14.500H15" stroke="#bbb" /><path d="M1 12L6 6L9 9L15 3" stroke="#d8232a" strokeWidth="1.500" /><path d="M1 9L5 13L9 5L12 11L15 5" stroke="#2a35c8" strokeWidth="1.300" /></g>],
  ['Kauf/Verkauf', <g key="5"><path d="M6.500 1L11 5.500H9V10H4.500V5.500H2Z" fill="#28c22f" stroke="#124a14" /><path d="M10.500 15L15 10.500H13V6H8.500V10.500H6Z" fill="#cc2222" stroke="#5d1010" /></g>],
  ['Summe', <path key="6" d="M13 5V2H3L9 8L3 14H13.500V11" fill="none" stroke="#2228a8" strokeWidth="2.200" />],
];

function SideStrip() {
  return (
    <aside className="mr-[3px] flex w-[25px] shrink-0 flex-col border border-b-0 border-r-2 border-[#9a9a9a] bg-[linear-gradient(90deg,#000,#4a4a4a)]">
      <div className="flex-1 pt-[144px]">
        <p className="mx-auto h-[100px] whitespace-nowrap font-['DejaVu_Sans',Verdana,sans-serif] text-[11px] font-bold leading-[22px] text-white [writing-mode:vertical-rl]">Werkzeugleiste</p>
      </div>
      {SIDE_ICONS.map(([label, icon]) => (
        <button key={label} aria-label={label} className={`flex h-5 items-center justify-center border-b border-[#777] ${label === 'Werkzeuge' ? 'bg-linear-to-b from-[#ffd98c] to-[#f6a63a]' : 'bg-[#f4f4f4]'}`}>
          <svg width="16" height="16" viewBox="0 0 16 16">{icon}</svg>
        </button>
      ))}
    </aside>
  );
}

/* ---------- status bar and task bar ---------- */

function StatusBar() {
  return (
    <footer className="mt-0.5 flex h-[23px] shrink-0 items-center border-t border-[#8c8c8c] bg-[#f0ecec] font-['Open_Sans',sans-serif] text-[11px] text-black">
      <span className="flex-1" />
      {[0, 1, 2, 3, 4, 5, 6].map((i) => <span key={i} className="h-5 w-6 border-l border-[#dad5d5]" />)}
      <div className="flex h-5 w-[371px] items-center gap-1 border-l border-[#dad5d5] pl-1">
        <svg width="15" height="15" viewBox="0 0 15 15"><circle cx="7.500" cy="7.500" r="7" fill="#2d86c8" stroke="#1b4d7c" /><path d="M3 3C5 1 8 2 7.500 4C7 6 4 5 4.500 8C5 10 2 8 1.500 6ZM9 6C12 5 14 7 13 9C12 12 9 13 9 10Z" fill="#5cc04a" /></svg>
        <span>Internet | Geschützter Modus: Aktiv</span>
      </div>
      <button className="flex h-5 w-[102px] items-center border-l border-[#dad5d5] pl-[11px]">
        <svg width="13" height="13" viewBox="0 0 13 13"><path d="M8 8L12 12" stroke="#b98452" strokeWidth="2.500" /><circle cx="5.500" cy="5.500" r="4.500" fill="#e0f1fc" stroke="#7396b4" /><path d="M5.500 2.500V8.500M2.500 5.500H8.500" stroke="#1460b4" strokeWidth="1.800" /></svg>
        <span className="ml-0.5 flex-1 text-left">100%</span>
        <svg width="8" height="5" className="mr-2.5"><path d="M0 0H8L4 5Z" fill="#000" /></svg>
        <svg width="12" height="12" className="mr-px mt-2" fill="#b5b0b0"><path d="M9 1H11V3H9ZM5 5H7V7H5ZM9 5H11V7H9ZM1 9H3V11H1ZM5 9H7V11H5ZM9 9H11V11H9Z" /></svg>
      </button>
    </footer>
  );
}

function TaskBar() {
  return (
    <nav className="flex h-[39px] shrink-0 items-stretch border-t border-[#0a2538] bg-[linear-gradient(90deg,#0d3f5c_0%,#0f4a6c_4%,#16618f_18%,#176292_40%,#1c6b9c_55%,#155a86_70%,#0d456a_85%,#0c3f60_100%)] font-['Open_Sans',sans-serif] text-white shadow-[inset_0_1px_0_#5796b8]">
      <button aria-label="Start" className="flex w-[58px] items-center justify-start pl-[7px]">
        <span className="flex size-9 items-center justify-center rounded-full border border-[#7fb4cc] bg-[radial-gradient(circle_at_50%_100%,#2fd3ff_0%,#1a6aa0_40%,#123f66_60%,#8fa6b8_100%)]">
          <WinFlag size={26} />
        </span>
      </button>
      <button aria-label="Internet Explorer" className="flex w-[55px] items-center justify-center border border-[#0b3048] bg-linear-to-b from-[#c6d5df] to-[#6e98b2] shadow-[inset_0_0_0_1px_#dbe8ef]"><IeLogo size={30} /></button>
      <span className="mr-[2px] w-[5px] border-r border-[#0b3048] bg-[#5d8fae]" />
      <button aria-label="Explorer" className="flex w-[59px] items-center justify-center border border-[#5d8fae] bg-[#1f6490]">
        <svg width="33" height="31" viewBox="0 0 33 31"><path d="M1 3H10L12 5H31V28H1Z" fill="#f0d27c" stroke="#b08a32" /><path d="M3 1.500H11V5H3Z" fill="#fdf6d8" /><path d="M5 2H8V4H5Z" fill="#2a2" /><path d="M12 4H19V7H12Z" fill="#fff" /><path d="M14 4H17V6H14Z" fill="#d33" /><path d="M20 6H28V9H20Z" fill="#fff" /><path d="M22 6H25V8H22Z" fill="#29d" /><path d="M1 9H32V28H1Z" fill="#f9e7a2" stroke="#c9a446" strokeWidth=".7" /><path d="M6 30V22C6 19 27 19 27 22V30H23V24H10V30Z" fill="#a5daf2" stroke="#4d9bc0" /></svg>
      </button>
      <button aria-label="Media Player" className="flex w-[62px] items-center justify-center">
        <svg width="28" height="28" viewBox="0 0 28 28"><path d="M1 2H20V25H1Z" fill="#5fa6c6" stroke="#3a7f9f" /><path d="M22 2V26M25 3V25" stroke="#8cc0d8" /><circle cx="12" cy="14" r="9" fill="#f6821f" stroke="#fbb16b" /><path d="M9 8.500L18 14L9 19.500Z" fill="#fff" /></svg>
      </button>
      <button aria-label="CCleaner" className="flex w-[64px] items-center justify-center">
        <svg width="30" height="32" viewBox="0 0 30 32"><path d="M27 9A13 13 0 1 0 28 22L21 20A6.500 6.500 0 1 1 20 11Z" fill="#d5262c" stroke="#f09a94" /><path d="M24 5L15 13L19 16Z" fill="#2c7cc8" stroke="#2c7cc8" strokeWidth="2" /><path d="M12 13L21 19L14 25L3 22Z" fill="#f3a04a" stroke="#a85d14" strokeWidth=".7" /></svg>
      </button>
      <span className="flex-1" />
      <div className="flex items-center">
        <button aria-label="Uhr" className="flex w-6 justify-center"><svg width="16" height="16" viewBox="0 0 16 16"><rect x=".5" y=".5" width="15" height="15" rx="2" fill="#dfe8ee" /><circle cx="8" cy="8" r="6" fill="#fff" stroke="#8aa" /><path d="M8 3V8L4.500 6" stroke="#345" fill="none" /><path d="M8 8L13 9L10 13Z" fill="#7fb4e0" /></svg></button>
        <button aria-label="Avira" className="flex w-6 justify-center"><svg width="16" height="16" viewBox="0 0 16 16"><path d="M0 0H16V16H0Z" fill="#dc0a1a" /><path d="M2 10C1 4 8 0 12 5M2 10L12 5M7.500 7L12 13.500L14 12M5 9C4 12 3 13 2 13.500" stroke="#fff" strokeWidth="1.500" fill="none" /></svg></button>
        <button aria-label="Lautstärke" className="flex w-6 justify-center"><svg width="14" height="14" viewBox="0 0 14 14"><path d="M1 5H3.500L7 1V13L3.500 9H1Z" fill="#fff" /><path d="M9 4.500C10.500 6 10.500 8 9 9.500M11 3C13 5.500 13 8.500 11 11" stroke="#dfe8ee" fill="none" /></svg></button>
        <button aria-label="Monitor" className="flex w-6 justify-center"><svg width="16" height="16" viewBox="0 0 16 16" fill="none"><path d="M2 2H4V13H2Z" fill="#2c6e56" /><path d="M6 3L8 6L6 9M9 5C15 5 15 14 9 14M9 8C12 8 12 11 9 11" stroke="#7cc49a" strokeWidth="1.500" /></svg></button>
        <button aria-label="Warnung" className="flex w-6 justify-center"><svg width="17" height="16" viewBox="0 0 17 16"><path d="M1 1H5V14H1ZM7 1H11V9H7Z" fill="#2a2f33" stroke="#8d979e" strokeWidth=".7" /><path d="M11 5L16.500 15H5.500Z" fill="#fff" stroke="#d3281e" strokeWidth="1.300" /><path d="M11 8.500V12M11 13V14" stroke="#d3281e" strokeWidth="1.300" /></svg></button>
        <button aria-label="Wartungscenter" className="flex w-6 justify-center"><svg width="15" height="15" viewBox="0 0 15 15"><path d="M1.500 1V15" stroke="#fff" strokeWidth="1.500" /><path d="M3 2H8V4H14L12 7L13 9H8V8H3Z" fill="#fff" /></svg></button>
        <button aria-label="Netzwerk" className="flex w-6 justify-center"><svg width="15" height="15" viewBox="0 0 15 15" fill="none" stroke="#fff"><path d="M5.500 4.500H14.500V11.500H3.500V8M9 12V14M6 14.500H12M1 .5V3.500H5V.5M3 4V8" /></svg></button>
      </div>
      <div className="flex w-[80px] flex-col items-center justify-center text-[11px] leading-[17px]">
        <time>18:38</time>
        <time>20.03.2009</time>
      </div>
      <button aria-label="Desktop anzeigen" className="mr-[2px] w-[13px] border border-[#5d8fae] bg-linear-to-b from-[#4f7f9c] to-[#0c3f60]" />
    </nav>
  );
}

export default function App() {
  return (
    <div className="flex h-screen min-h-[700px] flex-col overflow-hidden bg-white">
      <BrowserHeader />
      <ChartToolbar />
      <div className="flex min-h-0 flex-1">
        <DrawingTools />
        <ChartArea />
        <SideStrip />
      </div>
      <StatusBar />
      <TaskBar />
    </div>
  );
}
